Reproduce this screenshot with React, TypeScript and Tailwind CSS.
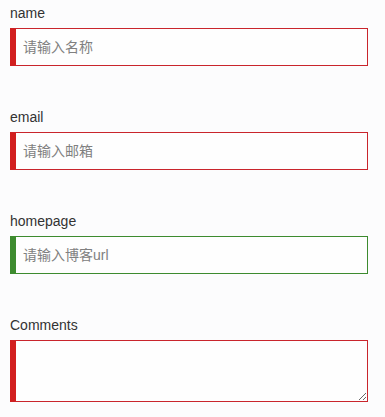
export default function App() {
  const fields = [
    { label: "name", placeholder: "请输入名称", ok: false },
    { label: "email", placeholder: "请输入邮箱", ok: false },
    { label: "homepage", placeholder: "请输入博客url", ok: true },
  ];

  return (
    <div
      className="min-h-[417px] bg-[#fcfcfd] px-[10px] pt-[3px] text-[14px] text-[#333]"
      style={{ fontFamily: '"Liberation Sans", Arial, "Noto Sans CJK SC", sans-serif' }}
    >
      <div className="flex w-[358px] flex-col gap-[41px]">
        {fields.map((f) => (
          <div key={f.label} className="flex flex-col gap-[5px]">
            <label className="leading-[20px]">{f.label}</label>
            <input
              placeholder={f.placeholder}
              className={`h-[38px] w-full border border-l-[6px] bg-[#fefefe] px-[7px] text-[14px] outline-none placeholder:text-[#808080] ${
                f.ok ? "border-[#3d8b2f]" : "border-[#c9252c] border-l-[#d21f1f]"
              }`}
            />
          </div>
        ))}
        <div className="flex flex-col gap-[5px]">
          <label className="leading-[20px]">Comments</label>
          <textarea className="block h-[62px] w-full border border-l-[6px] border-[#c9252c] border-l-[#d21f1f] bg-[#fefefe] px-[7px] outline-none" />
        </div>
      </div>
    </div>
  );
}
